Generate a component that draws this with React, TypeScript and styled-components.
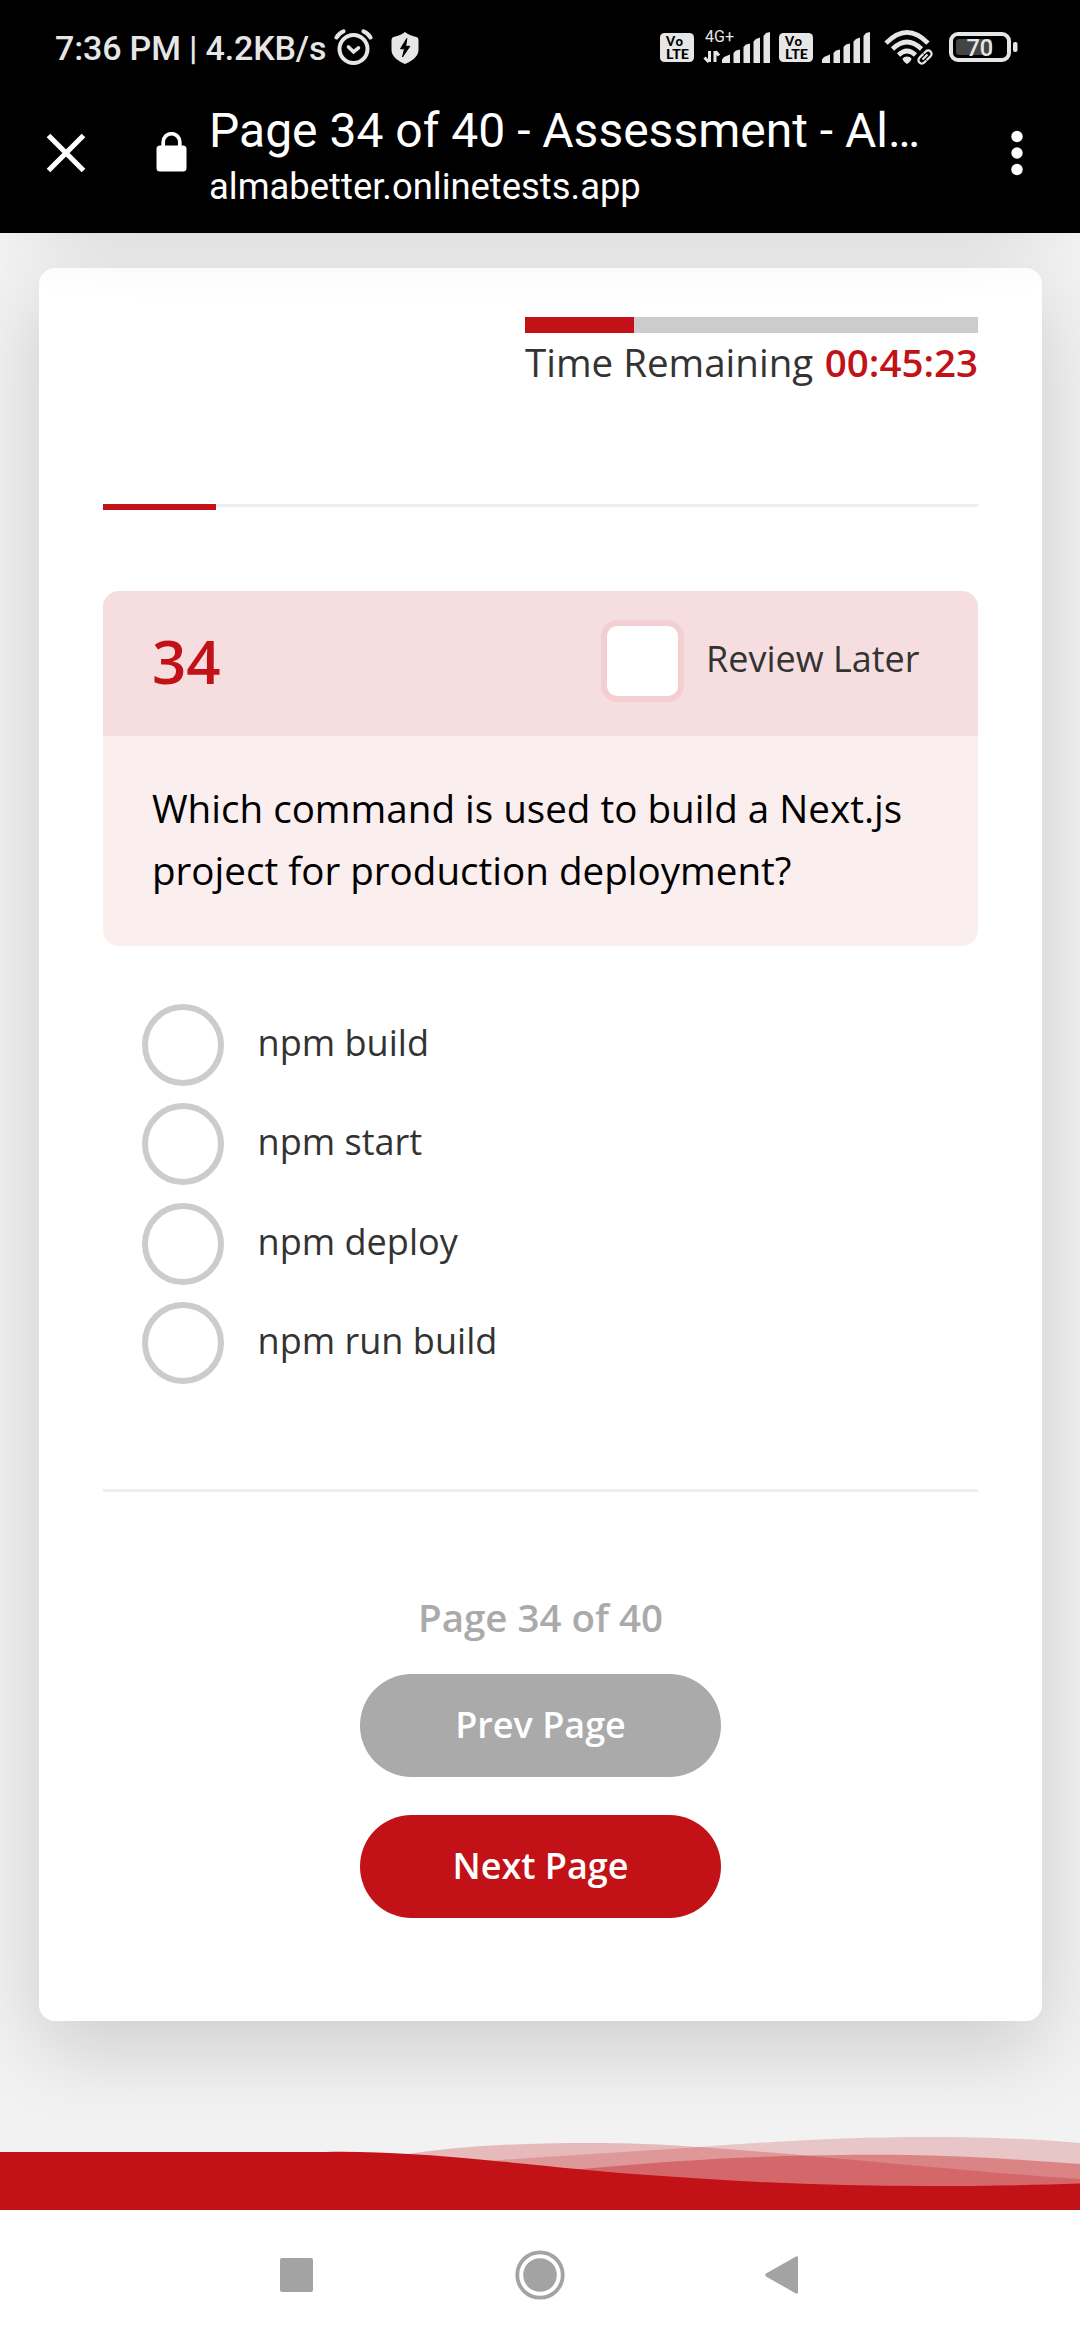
import React from 'react';
import styled, { createGlobalStyle } from 'styled-components';

const GlobalStyle = createGlobalStyle`
  * { box-sizing: border-box; }
  body { margin: 0; background: #fff; }
`;

const red = '#c21217';
const webFont = '"Open Sans", "Noto Sans", sans-serif';
const systemFont = 'Roboto, "Noto Sans", sans-serif';

const Screen = styled.div`
  width: 1080px;
  height: 2340px;
  display: flex;
  flex-direction: column;
  overflow: hidden;
  font-family: ${webFont};
`;

const BrowserChrome = styled.header`
  flex: none;
  height: 233px;
  background: #000;
  color: #fff;
  font-family: ${systemFont};
`;

const StatusBar = styled.div`
  height: 95px;
  padding: 0 62px 0 55px;
  display: flex;
  align-items: center;
  justify-content: space-between;
  color: #e6e6e6;
`;

const StatusGroup = styled.div`
  display: flex;
  align-items: center;
`;

const Clock = styled.span`
  width: 277px;
  font-size: 34px;
  letter-spacing: -0.16px;
  font-weight: 500;
  line-height: 40px;
  white-space: nowrap;
`;

const StatusIcon = styled.svg<{ $gap?: number }>`
  display: block;
  flex: none;
  margin-left: ${(p) => p.$gap ?? 0}px;
`;

const Toolbar = styled.div`
  height: 138px;
  display: flex;
  align-items: flex-start;
  padding: 0 57px 0 46px;
`;

const ToolIcon = styled.svg<{ $left?: number; $top: number }>`
  display: block;
  flex: none;
  margin-top: ${(p) => p.$top}px;
  margin-left: ${(p) => p.$left ?? 0}px;
`;

const Address = styled.div`
  flex: 1;
  margin-left: 22px;
  display: flex;
  flex-direction: column;
`;

const PageTitle = styled.div`
  margin-top: 8px;
  font-size: 48px;
  line-height: 56px;
  white-space: nowrap;
`;

const Host = styled.div`
  margin-top: 7px;
  font-size: 36.4px;
  line-height: 42px;
`;

const Page = styled.main`
  flex: none;
  position: relative;
  height: 1977px;
  padding: 35px 38px 0 39px;
  overflow: hidden;
  background: #f2f2f2;
`;

/* Soft shade that the scrolled-away page header leaves on the top of the page. */
const TopShade = styled.div`
  position: absolute;
  top: -300px;
  left: 39px;
  width: 1003px;
  height: 261px;
  border-radius: 16px;
  box-shadow: 0 27px 82px rgba(0, 0, 0, 0.157);
  pointer-events: none;
`;

const Card = styled.section`
  height: 1753px;
  padding: 49px 64px 0;
  display: flex;
  flex-direction: column;
  border-radius: 16px;
  background: #fff;
  box-shadow: 0 27px 82px rgba(0, 0, 0, 0.157);
`;

const Timer = styled.div`
  align-self: flex-end;
  width: 453px;
`;

const TimerTrack = styled.div`
  height: 16px;
  background: #ccc;
`;

const TimerFill = styled.div`
  height: 16px;
  width: 109px;
  background: ${red};
`;

const TimerText = styled.div`
  margin-top: 3px;
  display: flex;
  justify-content: space-between;
  font-size: 38.5px;
  line-height: 52px;
  color: #333;
  white-space: nowrap;
`;

const TimeValue = styled.b`
  font-weight: 600;
  color: ${red};
`;

const ProgressRail = styled.div`
  flex: none;
  height: 6px;
  margin-top: 116px;
  border-top: 3px solid #eee;
`;

const ProgressFill = styled.div`
  width: 113px;
  height: 6px;
  margin-top: -3px;
  background: ${red};
`;

const Question = styled.article`
  margin-top: 81px;
  border-radius: 16px;
  overflow: hidden;
  background: #faeeee;
`;

const QuestionHead = styled.div`
  height: 145px;
  padding: 0 57px 0 49px;
  display: flex;
  align-items: center;
  background: #f6dee0;
`;

const QuestionNumber = styled.h2`
  flex: 1;
  margin: -5px 0 0;
  font-size: 60px;
  line-height: 82px;
  font-weight: 600;
  color: ${red};
`;

const ReviewLabel = styled.label`
  margin-top: -5px;
  display: flex;
  align-items: center;
  font-size: 36px;
  line-height: 50px;
  color: #333;
`;

const ReviewText = styled.span`
  width: 215px;
  margin: -4px 0 0 22px;
  white-space: nowrap;
`;

const Checkbox = styled.span`
  width: 83px;
  height: 82px;
  border: 6px solid #f3cfd1;
  border-radius: 16px;
  background: #fff;
`;

const QuestionText = styled.p`
  height: 210px;
  margin: 0;
  padding: 41px 48px 0 49px;
  font-size: 38.6px;
  line-height: 62px;
  color: #000;
`;

const Options = styled.ul`
  list-style: none;
  margin: 58px 0 0;
  padding: 0 0 0 39px;
`;

const Option = styled.li`
  height: 99.4px;
  display: flex;
  align-items: flex-start;
  font-size: 36.1px;
  line-height: 50px;
  color: #333;
`;

const Radio = styled.span`
  width: 82px;
  height: 82px;
  border: 6px solid #ccc;
  border-radius: 50%;
`;

const OptionText = styled.span`
  margin: 13px 0 0 33.5px;
`;

const Divider = styled.hr`
  flex: none;
  width: 100%;
  height: 3px;
  margin: 87.4px 0 0;
  border: 0;
  background: #eee;
`;

const Pager = styled.nav`
  display: flex;
  flex-direction: column;
  align-items: center;
  margin-top: 99px;
`;

const PageCount = styled.div`
  font-size: 38.5px;
  line-height: 52px;
  font-weight: 600;
  color: #aaa;
`;

const PagerButton = styled.button<{ $color: string; $top: number }>`
  width: 361px;
  height: 103px;
  margin-top: ${(p) => p.$top}px;
  padding: 0 0 1px;
  border: 0;
  border-radius: 52px;
  background: ${(p) => p.$color};
  color: #fff;
  font-family: ${webFont};
  font-size: 36px;
  font-weight: 600;
`;

/* Decorative wave behind the bottom of the page. */
const Wave = styled.svg`
  position: absolute;
  left: 0;
  bottom: 0;
  display: block;
`;

const NavBar = styled.footer`
  flex: 1;
  padding-right: 1px;
  display: flex;
  align-items: center;
  justify-content: center;
  gap: 200px;
  background: #fff;
`;

const options = ['npm build', 'npm start', 'npm deploy', 'npm run build'];

const VoLte = ({ gap }: { gap?: number }) => (
  <StatusIcon $gap={gap} width="34" height="36" viewBox="0 0 34 36" fontFamily="Lato" fontWeight="900" fill="#000">
    <rect y="3" width="34" height="29" rx="4.5" fill="#e6e6e6" />
    <text x="6" y="16" fontSize="13" textLength="17">Vo</text>
    <text x="6" y="28.5" fontSize="13" textLength="23" lengthAdjust="spacingAndGlyphs">LTE</text>
  </StatusIcon>
);

const Bars = () => (
  <g fill="#e6e6e6">
    <path d="M0 33V29.500L2 27L8 24.500V33ZM11.500 33V23L14 20.500L18 19.500V33ZM21.500 33V17L24 14.500L28 13.500V33ZM31.500 33V11.500L34 9L38 7.500V33ZM41.500 33V6L44 3L48 2V33Z" />
  </g>
);

const App = () => (
  <Screen>
    <GlobalStyle />
    <BrowserChrome>
      <StatusBar>
        <StatusGroup>
          <Clock>7:36 PM | 4.2KB/s</Clock>
          <StatusIcon $gap={2} width="39" height="37" viewBox="0 0 39 37" fill="none" stroke="#e6e6e6" strokeLinecap="round">
            <circle cx="19.500" cy="20" r="14" strokeWidth="4" />
            <path d="M2.500 8.500C4 5.500 6.500 3.500 9.500 2.300M36.500 8.500C35 5.500 32.500 3.500 29.500 2.300" strokeWidth="4" />
            <path d="M14.500 18L19.500 22.800L24.500 18.800" strokeWidth="3.600" />
          </StatusIcon>
          <StatusIcon $gap={18} width="28" height="32" viewBox="0 0 28 32">
            <path d="M14 0C17 2.800 22 4 25.500 5Q27.500 5.600 27.500 8V18C27.500 25 20 29.500 14 32C8 29.500 .5 25 .5 18V8Q.5 5.600 2.500 5C6 4 11 2.800 14 0Z" fill="#e6e6e6" />
            <path d="M15.800 6.500L9.500 16.800H13.500L11.500 25L18.800 14.300H14.700Z" fill="#000" stroke="#000" />
          </StatusIcon>
        </StatusGroup>
        <StatusGroup>
          <VoLte />
          <StatusIcon $gap={9} width="68" height="52" viewBox="0 -8 68 52">
            <text x="2" y="11.500" fontSize="16" fill="#e6e6e6" textLength="29">4G+</text>
            <path d="M6.500 21V32M5.800 32L1.500 27.500M12 32V21M12.600 21.500L16 25.500" stroke="#e6e6e6" strokeWidth="3" fill="none" />
            <g transform="translate(19 0)"><Bars /></g>
          </StatusIcon>
          <VoLte gap={8} />
          <StatusIcon $gap={9} width="48" height="36" viewBox="0 0 48 36"><Bars /></StatusIcon>
          <StatusIcon $gap={14} width="50" height="36" viewBox="0 0 50 36" fill="none" stroke="#e6e6e6">
            <path d="M2 13.200Q23 -8.500 44 13.200M8.500 19Q23 5 37.500 19M14.500 25Q23 17 31.500 25" strokeWidth="4.600" />
            <path d="M23 26.500Q26 26.500 27.500 28.500Q27 31.500 23 34Q19 31.500 18.500 28.500Q20 26.500 23 26.500Z" fill="#e6e6e6" stroke="none" />
            <g transform="translate(41 27) rotate(-45)">
              <rect x="-10" y="-4.500" width="20" height="9" fill="#000" stroke="none" />
              <path d="M1 -3.400H-4.500A3.400 3.400 0 0 0 -4.500 3.400H-1.500M-1 3.400H4.500A3.400 3.400 0 0 0 4.500 -3.400H1.500" strokeWidth="2.200" />
              <path d="M-3.500 0H3.500" strokeWidth="2" />
            </g>
          </StatusIcon>
          <StatusIcon $gap={15} width="69" height="36" viewBox="0 0 69 36">
            <rect x="2" y="4" width="58" height="26" rx="7" fill="none" stroke="#e6e6e6" strokeWidth="4" />
            <rect x="7" y="9" width="36" height="16" rx="3" fill="#444" />
            <rect x="64" y="12" width="4.500" height="10" rx="2" fill="#e6e6e6" />
            <text x="17.500" y="25.500" fontSize="23.500" fontWeight="500" fill="#e6e6e6" textLength="26.500">70</text>
          </StatusIcon>
        </StatusGroup>
      </StatusBar>
      <Toolbar>
        <ToolIcon $top={38} width="40" height="40" viewBox="0 0 40 40" stroke="#fff" strokeWidth="5.200">
          <path d="M2.500 2.500L37.500 37.500M37.500 2.500L2.500 37.500" />
        </ToolIcon>
        <ToolIcon $top={37} $left={70} width="31" height="40" viewBox="0 0 31 40">
          <path d="M7.200 16V10A8.300 8.300 0 0 1 23.800 10V16" fill="none" stroke="#fff" strokeWidth="3.700" />
          <rect x=".5" y="13.500" width="30" height="26" rx="3.500" fill="#fff" />
        </ToolIcon>
        <Address>
          <PageTitle>Page 34 of 40 - Assessment - Al…</PageTitle>
          <Host>almabetter.onlinetests.app</Host>
        </Address>
        <ToolIcon $top={35} width="12" height="46" viewBox="0 0 12 46" fill="#fff">
          <circle cx="6" cy="6.500" r="5.700" />
          <circle cx="6" cy="23" r="5.700" />
          <circle cx="6" cy="39.500" r="5.700" />
        </ToolIcon>
      </Toolbar>
    </BrowserChrome>

    <Page>
      <Card>
        <Timer>
          <TimerTrack><TimerFill /></TimerTrack>
          <TimerText><span>Time Remaining</span><TimeValue>00:45:23</TimeValue></TimerText>
        </Timer>
        <ProgressRail><ProgressFill /></ProgressRail>
        <Question>
          <QuestionHead>
            <QuestionNumber>34</QuestionNumber>
            <ReviewLabel><Checkbox /><ReviewText>Review Later</ReviewText></ReviewLabel>
          </QuestionHead>
          <QuestionText>Which command is used to build a Next.js project for production deployment?</QuestionText>
        </Question>
        <Options>
          {options.map((text) => (
            <Option key={text}><Radio /><OptionText>{text}</OptionText></Option>
          ))}
        </Options>
        <Divider />
        <Pager>
          <PageCount>Page 34 of 40</PageCount>
          <PagerButton $color="#aaa" $top={31}>Prev Page</PagerButton>
          <PagerButton $color={red} $top={38}>Next Page</PagerButton>
        </Pager>
      </Card>
      <TopShade />
      <Wave width="1080" height="80" viewBox="0 2130 1080 80" fill={red}>
        <path fillOpacity=".25" d="M400 2155C460 2146 520 2143 586 2143C640 2143 670 2145 699 2147C740 2150 775 2152.500 810 2156C910 2165 990 2173 1080 2179V2210H400Z" />
        <path fillOpacity=".2" d="M400 2167C440 2164 470 2162 500 2160C570 2155 630 2152 699 2147C780 2141 850 2137 929 2137C985 2137 1035 2139 1080 2143V2210H400Z" />
        <path fillOpacity=".36" d="M540 2172L582 2169C660 2162 730 2157 810 2155.500C850 2154.600 890 2154.500 910 2155C970 2156 1025 2160 1080 2164V2210H540Z" />
        <path d="M0 2152H325C378 2151 430 2155 485 2160C518 2163 548 2166 582 2169.500C620 2173.500 660 2176 700 2178.500C775 2183.500 850 2186 929 2186C985 2186 1035 2185 1080 2183.500V2210H0Z" />
      </Wave>
    </Page>

    <NavBar>
      <svg width="35" height="34" viewBox="0 0 35 34"><rect width="33" height="34" rx="2" fill="#a3a3a3" /></svg>
      <svg width="50" height="50" viewBox="0 0 50 50" fill="#a3a3a3">
        <circle cx="25" cy="25" r="22.700" fill="none" stroke="#a3a3a3" strokeWidth="3.800" />
        <circle cx="25" cy="25" r="16.800" />
      </svg>
      <svg width="34" height="40" viewBox="0 0 34 40"><path d="M1 18.500L31 1.500Q33 .5 33 3V37Q33 39.500 31 38.500L1 21.500Q-.5 20 1 18.500Z" fill="#a3a3a3" /></svg>
    </NavBar>
  </Screen>
);

export default App;
